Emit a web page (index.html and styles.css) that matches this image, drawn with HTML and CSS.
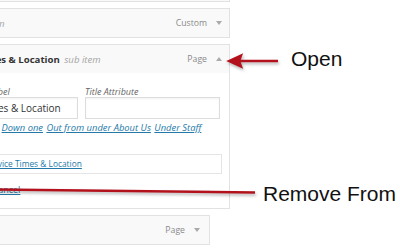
FILE: index.html
```html
<!DOCTYPE html>
<html lang="en">
<head>
  <meta charset="UTF-8">
  <title>Menu structure</title>
  <link rel="stylesheet" href="styles.css">
</head>
<body>
  <div class="screen">
    <ul class="menu">
      <li class="item stub"><div class="item-bar"></div></li>
      <li class="item">
        <div class="item-bar">
          <span class="item-title"><b>Staff</b> <em>sub item</em></span>
          <span class="item-type">Custom</span>
          <span class="toggle"></span>
        </div>
      </li>
      <li class="item open">
        <div class="item-bar">
          <span class="item-title"><b>Service Times &amp; Location</b> <em>sub item</em></span>
          <span class="item-type">Page</span>
          <span class="toggle up"></span>
        </div>
        <div class="settings">
          <div class="fields">
            <label class="field">
              <span class="field-label">Navigation Label</span>
              <input type="text" value="Service Times &amp; Location">
            </label>
            <label class="field">
              <span class="field-label">Title Attribute</span>
              <input type="text" value="">
            </label>
          </div>
          <p class="move">Move <a href="#">Up one</a> <a href="#">Down one</a> <a href="#">Out from under About Us</a> <a href="#">Under Staff</a></p>
          <p class="original">Original: <a href="#">Service Times &amp; Location</a></p>
          <p class="actions"><a href="#" class="remove">Remove</a> | <a href="#">Cancel</a></p>
        </div>
      </li>
      <li class="item shallow">
        <div class="item-bar">
          <span class="item-title"><b>Contact</b></span>
          <span class="item-type">Page</span>
          <span class="toggle"></span>
        </div>
      </li>
    </ul>

    <svg class="arrows" width="400" height="250" viewBox="0 0 400 250">
      <g class="arrow">
        <line x1="278" y1="61" x2="236" y2="61"/>
        <polygon points="229,61 241,55.5 239,61 241,66.5"/>
      </g>
      <g class="arrow">
        <line x1="-4" y1="189.5" x2="255" y2="192.5"/>
      </g>
    </svg>
    <div class="note note-open">Open</div>
    <div class="note note-remove">Remove From</div>
  </div>
</body>
</html>
```

FILE: styles.css
```css
body {
  margin: 0;
  background: #fff;
  font-family: "Open Sans", sans-serif;
}
.screen {
  position: relative;
  width: 400px;
  height: 250px;
  overflow: hidden;
}
.menu {
  list-style: none;
  margin: 0;
  padding: 0;
  display: flex;
  flex-direction: column;
  gap: 6px;
}
.item {
  width: 300px;
  margin-left: -72px;
  border: 1px solid #e2e2e2;
  background: #f9f9f9;
}
.item.stub {
  margin-top: -28px;
}
.item.shallow {
  margin-left: -92px;
}
.item.open {
  background: #fff;
}
.item-bar {
  display: flex;
  align-items: center;
  height: 28px;
  padding: 0 6px 0 12px;
  background: #f9f9f9;
  white-space: nowrap;
}
.shallow .item-bar {
  padding-right: 8px;
}
.item-title {
  flex: 1;
  font-size: 9.6px;
  color: #333;
}
.item-title em {
  color: #a5a5a5;
  margin-left: 2px;
}
.item-type {
  font-size: 8.7px;
  color: #8a8a8a;
  margin-right: 9px;
}
.toggle {
  width: 0;
  height: 0;
  border-left: 3px solid transparent;
  border-right: 3px solid transparent;
  border-top: 4px solid #aaa;
  margin-right: 1px;
}
.toggle.up {
  border-top: 0;
  border-bottom: 4px solid #aaa;
}
.settings {
  padding: 13px 7px 12px 14px;
}
.fields {
  display: flex;
  gap: 7px;
}
.field {
  display: flex;
  flex-direction: column;
  width: 135px;
}
.field-label {
  font-size: 9px;
  font-style: italic;
  line-height: 11px;
  color: #666;
}
.field input {
  box-sizing: border-box;
  height: 22px;
  padding: 0 0 0 1px;
  border: 1px solid #ddd;
  box-shadow: inset 0 1px 2px rgba(0, 0, 0, 0.05);
  font-family: "Open Sans", sans-serif;
  font-size: 10px;
  color: #333;
}
.move {
  margin: 3px 0 0;
  font-size: 9.4px;
  font-style: italic;
  line-height: 12px;
  color: #666;
  white-space: nowrap;
}
.move a {
  margin-left: 1px;
}
a {
  color: #2479a8;
}
.original {
  box-sizing: border-box;
  height: 20px;
  margin: 20px 0 0;
  padding: 0 6px;
  border: 1px solid #e5e5e5;
  font-size: 8.4px;
  line-height: 18px;
  color: #666;
  white-space: nowrap;
}
.actions {
  margin: 10px 0 0;
  padding-left: 6px;
  font-size: 9px;
  line-height: 12px;
  color: #999;
}
.actions .remove {
  color: #a00;
}
.arrows {
  position: absolute;
  left: 0;
  top: 0;
}
.arrow {
  stroke: #b3121d;
  stroke-width: 2.4;
  fill: #b3121d;
  filter: drop-shadow(1px 2px 1.5px rgba(0, 0, 0, 0.3));
}
.note {
  position: absolute;
  font-family: "Liberation Sans", Arial, sans-serif;
  font-size: 21px;
  color: #111;
  white-space: nowrap;
}
.note-open {
  left: 291px;
  top: 47px;
}
.note-remove {
  left: 263px;
  top: 182px;
}
```
